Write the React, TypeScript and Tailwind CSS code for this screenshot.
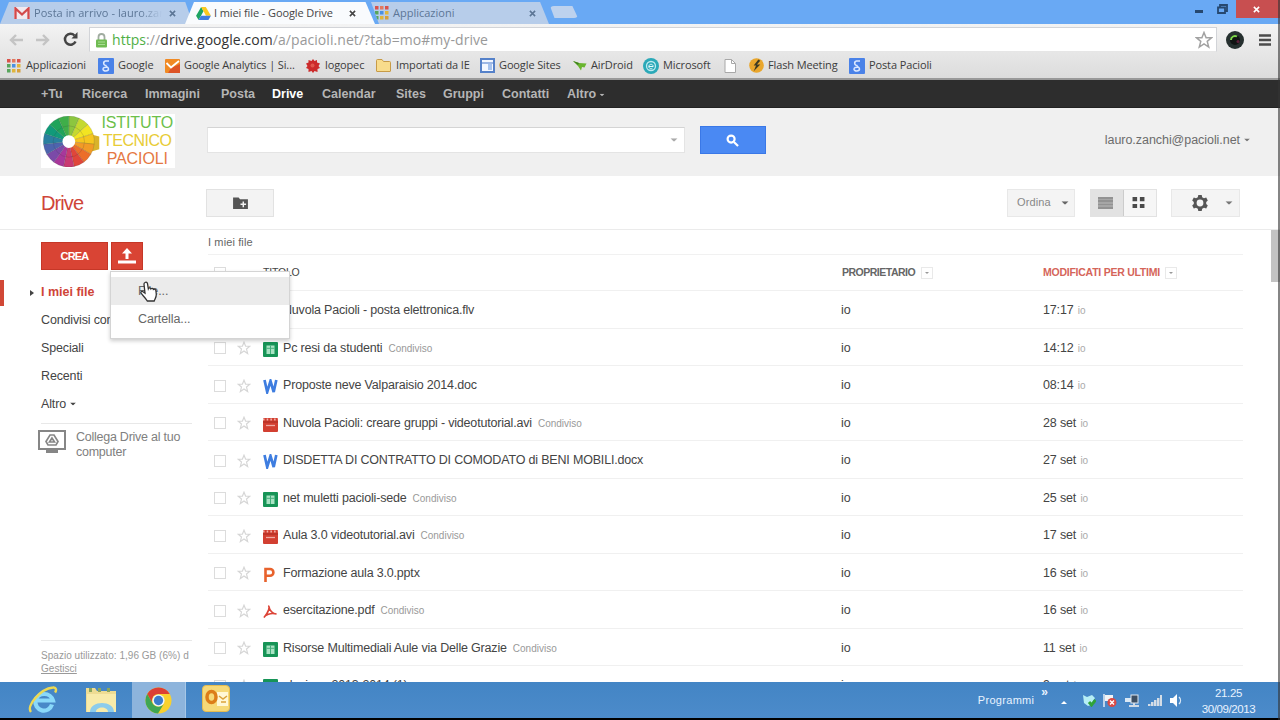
import React from "react";

type FileKind = "video" | "sheet" | "word" | "ppt" | "pdf";

const files: { kind: FileKind; name: string; shared?: boolean; date: string }[] = [
  { kind: "video", name: "Nuvola Pacioli - posta elettronica.flv", date: "17:17" },
  { kind: "sheet", name: "Pc resi da studenti", shared: true, date: "14:12" },
  { kind: "word", name: "Proposte neve Valparaisio 2014.doc", date: "08:14" },
  { kind: "video", name: "Nuvola Pacioli: creare gruppi - videotutorial.avi", shared: true, date: "28 set" },
  { kind: "word", name: "DISDETTA DI CONTRATTO DI COMODATO di BENI MOBILI.docx", date: "27 set" },
  { kind: "sheet", name: "net muletti pacioli-sede", shared: true, date: "25 set" },
  { kind: "video", name: "Aula 3.0 videotutorial.avi", shared: true, date: "17 set" },
  { kind: "ppt", name: "Formazione aula 3.0.pptx", date: "16 set" },
  { kind: "pdf", name: "esercitazione.pdf", shared: true, date: "16 set" },
  { kind: "sheet", name: "Risorse Multimediali Aule via Delle Grazie", shared: true, date: "11 set" },
  { kind: "sheet", name: "elezione 2013-2014 (1)", date: "9 set" },
];

function Caret({ className = "" }: { className?: string }) {
  return (
    <svg viewBox="0 0 8 4" className={`h-1 w-2 shrink-0 ${className}`} fill="currentColor">
      <path d="M0 0h8L4 4z" />
    </svg>
  );
}

function Star({ className = "" }: { className?: string }) {
  return (
    <svg viewBox="0 0 24 24" className={className} fill="none" stroke="currentColor" strokeWidth="2">
      <path d="M12 2l2.800 7h7.200l-5.700 4.800 2 7.700L12 17.200l-6.300 4.300 2-7.700L2 9h7.200z" />
    </svg>
  );
}

function FileIcon({ kind }: { kind: FileKind }) {
  if (kind === "sheet") {
    return (
      <svg viewBox="0 0 15 15" className="h-[15px] w-[15px]">
        <rect width="15" height="15" rx="1" fill="#179457" />
        <rect x="3.500" y="3.500" width="8" height="8.500" fill="#a9e3c4" />
        <path d="M7.500 3.500v8.500M3.500 6.300h8" stroke="#45ae7c" strokeWidth="1" />
      </svg>
    );
  }
  if (kind === "video") {
    return (
      <svg viewBox="0 0 15 15" className="h-[15px] w-[15px]">
        <rect y="1" width="15" height="14" rx="1" fill="#d23f31" />
        <path d="M0 2.500h15" stroke="#f2b5ae" strokeWidth="2" strokeDasharray="1.500 2.200" />
        <path d="M0 5h15" stroke="#a92c22" />
        <path d="M3 8.500h9" stroke="#f0aaa3" strokeWidth="1.300" />
      </svg>
    );
  }
  if (kind === "pdf") {
    return (
      <svg viewBox="0 0 15 15" className="h-[15px] w-[15px]" fill="none" stroke="#dc4437" strokeWidth="1.600">
        <path d="M5.400 1.500C7 3 5.900 7.500 1 13.500c1-2.600 6.500-5 12.500-3.500-3.500 0-7-3-7.500-7.500" />
      </svg>
    );
  }
  if (kind === "ppt") {
    return (
      <svg viewBox="0 0 15 15" className="h-[15px] w-[15px]" fill="none" stroke="#e8622c" strokeWidth="2.600">
        <path d="M2.500 15V2h4.500a3.300 3.300 0 0 1 0 6.800H3" />
      </svg>
    );
  }
  return (
    <svg viewBox="0 0 15 15" className="h-[15px] w-[15px]" fill="none" stroke="#3e7de0" strokeWidth="2.700">
      <path d="M1.500 1l2.700 12L7.500 2l3.200 11L13.300 1" />
    </svg>
  );
}

function GoogleG() {
  return (
    <svg viewBox="0 0 16 16" className="h-4 w-4">
      <rect width="16" height="16" rx="1" fill="#4a82e8" />
      <path d="M11 3H7.500a2.300 2.300 0 1 0 1 4.500c-1.500 1.200 2 1.500 2 3.500 0 2.500-5.500 2.500-5.500.2C5 9.500 7 9.200 9 9.300" fill="none" stroke="#dbe8ff" strokeWidth="1.500" />
    </svg>
  );
}

function AppsIcon() {
  const colors = ["#d9534a", "#e2795f", "#d9534a", "#58a55c", "#4a90e2", "#e0b53c", "#58a55c", "#e0b53c", "#d8a03c"];
  return (
    <svg viewBox="0 0 14 14" className="h-3.5 w-3.5">
      {colors.map((c, i) => (
        <rect key={i} x={(i % 3) * 5} y={Math.floor(i / 3) * 5} width="3.500" height="3.500" fill={c} />
      ))}
    </svg>
  );
}

function DriveLogo() {
  return (
    <svg viewBox="0 0 16 14" className="h-[13px] w-[15px]">
      <path d="M5.500 0L0 9.500 2.700 14 8 4.500z" fill="#1da462" />
      <path d="M5.500 0h5L16 9.500h-5.300z" fill="#fbc91f" />
      <path d="M5.300 9.500H16L13.300 14H2.700z" fill="#3f7de0" />
    </svg>
  );
}

function TabClose({ className = "" }: { className?: string }) {
  return (
    <svg viewBox="0 0 8 8" className={`h-[7px] w-[7px] shrink-0 ${className}`} stroke="currentColor" strokeWidth="1.800">
      <path d="M1 1l6 6M7 1L1 7" />
    </svg>
  );
}

const bookmarks = [
  { w: "w-[91px]", icon: <AppsIcon />, text: "Applicazioni", gap: "gap-[5px]" },
  { w: "w-[67px]", icon: <GoogleG />, text: "Google", gap: "gap-1" },
  {
    w: "w-[141px]",
    icon: (
      <svg viewBox="0 0 15 14" className="h-3.5 w-[15px]">
        <rect width="15" height="14" rx="1" fill="#f08a24" />
        <path d="M15 5v9H3l3-5z" fill="#dd5426" />
        <path d="M1.500 4L6 8.500l3-2.500 5-4" fill="none" stroke="#fff" strokeWidth="1.800" />
      </svg>
    ),
    text: "Google Analytics | Si...",
    gap: "gap-1",
  },
  {
    w: "w-[70px]",
    icon: (
      <svg viewBox="0 0 14 14" className="h-3.5 w-3.5">
        <path d="M7 0l1.500 2L11 1v2.500l3 1-1.500 2.500L14 9l-2.500 1v3L8.500 12 7 14l-1.500-2-3 1V10L0 9l1.500-2L0 4.500l2.500-1V1l3 1z" fill="#cc2a2a" />
        <circle cx="6.500" cy="6.500" r="2" fill="#e2564c" />
      </svg>
    ),
    text: "logopec",
    gap: "gap-[5px]",
  },
  {
    w: "w-[104px]",
    icon: (
      <svg viewBox="0 0 15 13" className="h-[13px] w-[15px]">
        <path d="M.5 12V1.500A1 1 0 0 1 1.500.5H6l1.500 2h6a1 1 0 0 1 1 1V12a.5.5 0 0 1-.5.5H1a.5.5 0 0 1-.5-.5z" fill="#f8dc8c" stroke="#c79b47" />
      </svg>
    ),
    text: "Importati da IE",
    gap: "gap-[5px]",
  },
  {
    w: "w-[93px]",
    icon: (
      <svg viewBox="0 0 15 15" className="h-[15px] w-[15px]">
        <rect x="1" y="1" width="13" height="13" fill="#f3f7ff" stroke="#5581c9" strokeWidth="2" />
        <path d="M2 5h11" stroke="#7fa2dc" strokeWidth="1.500" />
        <rect x="8" y="6" width="4" height="6" fill="#a7c3ee" />
      </svg>
    ),
    text: "Google Sites",
    gap: "gap-1",
  },
  {
    w: "w-[70px]",
    icon: (
      <svg viewBox="0 0 14 12" className="h-3 w-3.5">
        <path d="M0 1l6 2 7.500.5-2 4-2.500-.5-1 3.500L5 6z" fill="#69b52e" />
        <path d="M0 1l6 2-1 2z" fill="#3e7f1c" />
      </svg>
    ),
    text: "AirDroid",
    gap: "gap-1",
  },
  {
    w: "w-[81px]",
    icon: (
      <svg viewBox="0 0 16 16" className="h-4 w-4">
        <circle cx="8" cy="8" r="8" fill="#2ba9b8" />
        <circle cx="8" cy="8" r="4.500" fill="none" stroke="#bfeaf0" strokeWidth="1.300" />
        <path d="M6 8.500h4.200a2.200 2.200 0 1 0-.8 1.700" fill="none" stroke="#e6fafc" />
      </svg>
    ),
    text: "Microsoft",
    gap: "gap-1",
  },
  {
    w: "w-[25px]",
    icon: (
      <svg viewBox="0 0 12 14" className="h-3.5 w-3">
        <path d="M1 .5h6.500l4 4v9H1z" fill="#fff" stroke="#a8a8a8" />
        <path d="M7.500.5v4h4" fill="none" stroke="#a8a8a8" />
      </svg>
    ),
    text: "",
    gap: "gap-0",
  },
  {
    w: "w-[100px]",
    icon: (
      <svg viewBox="0 0 16 16" className="h-[15px] w-[15px]">
        <circle cx="8" cy="8" r="7.800" fill="#e9a62c" />
        <path d="M10 1.500L5 8h2.500L5 14l7-7H8.500l3.500-4z" fill="#3c3a24" />
      </svg>
    ),
    text: "Flash Meeting",
    gap: "gap-1",
  },
  { w: "w-[90px]", icon: <GoogleG />, text: "Posta Pacioli", gap: "gap-1" },
];

function BrowserChrome() {
  return (
    <header className="shrink-0 font-['Open_Sans',sans-serif]">
      <div className="flex h-6 items-end bg-[#69a9f4] text-[11px] text-[#5c7696]">
        <div className="-mr-2 flex h-[22px] w-[193px] items-center bg-[#b7cdea] pl-3.5 [clip-path:polygon(0_100%,9px_0,96%_0,100%_100%)]">
          <svg viewBox="0 0 16 12" className="h-3 w-4 shrink-0">
            <rect width="16" height="12" rx="1" fill="#f1e9ef" />
            <path d="M1.500 12V1.500L8 7.500l6.500-6V12" fill="none" stroke="#d34a4c" strokeWidth="2.300" />
          </svg>
          <span className="ml-1 w-[128px] overflow-hidden whitespace-nowrap tracking-[0.05px] [mask-image:linear-gradient(90deg,#000_82%,transparent)]">
            Posta in arrivo - lauro.zan
          </span>
          <TabClose className="ml-[7px]" />
        </div>
        <div className="z-10 flex h-[22px] w-[190px] items-center bg-[#f9fbfd] pl-[11px] text-[#454545] [clip-path:polygon(0_100%,9px_0,95%_0,100%_100%)]">
          <DriveLogo />
          <span className="ml-[3px] w-[128px] whitespace-nowrap tracking-[-0.1px]">I miei file - Google Drive</span>
          <TabClose className="ml-[7px]" />
        </div>
        <div className="-ml-1 flex h-[22px] w-[178px] items-center bg-[#b7cdea] pl-1 [clip-path:polygon(0_0,95%_0,100%_100%,8px_100%)]">
          <AppsIcon />
          <span className="ml-1 w-[136px]">Applicazioni</span>
          <TabClose />
        </div>
        <div className="mb-[6px] ml-[1px] h-3 w-7 rounded-sm bg-[#bdd2ee] [clip-path:polygon(0_0,80%_0,100%_100%,16%_100%)]" />
        <div className="ml-auto flex h-6 items-start text-[#26486f]">
          <div className="mr-[14px] mt-[10px] h-[3px] w-2 bg-[#26486f]" />
          <svg viewBox="0 0 11 10" className="mr-2 mt-1 h-2.5 w-[11px]" fill="none" stroke="currentColor" strokeWidth="1.800">
            <path d="M3 3V1h7v6H8M1 3.500h7V9H1z" />
          </svg>
          <div className="flex h-[18px] w-[44px] items-center justify-center bg-[#c84f50] pr-1 text-white">
            <TabClose />
          </div>
        </div>
      </div>
      <div className="h-14 border-b-2 border-[#999] bg-linear-to-b from-[#f3f3f3] to-[#dcdcdc]">
        <div className="flex h-7 items-end">
          <div className="flex h-[25px] w-[89px] items-center">
            <svg viewBox="0 0 14 12" className="ml-[9px] h-3 w-3.5" fill="none" stroke="#c4c4c4" strokeWidth="2.400">
              <path d="M14 6H2M7 1L2 6l5 5" />
            </svg>
            <svg viewBox="0 0 14 12" className="ml-[13px] h-3 w-3.5" fill="none" stroke="#c4c4c4" strokeWidth="2.400">
              <path d="M0 6h12M7 1l5 5-5 5" />
            </svg>
            <svg viewBox="0 0 15 15" className="ml-[13px] h-[15px] w-[15px]" fill="none" stroke="#444" strokeWidth="2.500">
              <path d="M12.500 9.500a5.500 5.500 0 1 1-1-6" />
              <path d="M14.500 0v6.500H8.500z" fill="#444" stroke="none" />
            </svg>
          </div>
          <div className="flex h-[25px] w-[1128px] items-center border border-[#d2d4d8] border-b-[#e6e6e6] bg-white pl-[6px] pr-[3px] pt-px">
            <svg viewBox="0 0 11 15" className="h-[15px] w-[11px]">
              <path d="M2.500 7V4a3 3 0 0 1 6 0v3" fill="none" stroke="#a0aca0" strokeWidth="1.800" />
              <rect y="6.500" width="11" height="8" rx="1" fill="#6fbb52" />
              <path d="M2 9h7M2 11.500h7" stroke="#a8dc92" />
            </svg>
            <span className="ml-[5px] whitespace-nowrap text-[14px] leading-5 tracking-[0.06px] text-[#999]">
              <span className="text-[#4faf45]">https</span>://<span className="text-[#333]">drive.google.com</span>
              /a/pacioli.net/?tab=mo#my-drive
            </span>
            <Star className="ml-auto h-[18px] w-[18px] text-[#a2a2a2]" />
          </div>
          <svg viewBox="0 0 18 18" className="mb-[3px] ml-[9px] h-[18px] w-[18px]">
            <circle cx="9" cy="9" r="9" fill="#26302f" />
            <circle cx="9" cy="9" r="5" fill="#101413" />
            <path d="M5 9a4 4 0 0 1 6-3.500" fill="none" stroke="#7cd64a" strokeWidth="2" />
            <circle cx="12" cy="10.500" r="1.500" fill="#5b1f3a" />
          </svg>
          <svg viewBox="0 0 12 12" className="mb-[6px] ml-[15px] h-3 w-3" stroke="#4c4c4c" strokeWidth="2.400">
            <path d="M0 1.500h12M0 6h12M0 10.500h12" />
          </svg>
        </div>
        <nav className="flex h-[26px] items-center pl-[7px] pt-px text-[11px] text-[#3c3c3c]">
          {bookmarks.map((b, i) => (
            <a key={i} className={`flex shrink-0 items-center whitespace-nowrap tracking-[-0.12px] ${b.w} ${b.gap}`}>
              <span className="shrink-0">{b.icon}</span>
              {b.text}
            </a>
          ))}
        </nav>
      </div>
    </header>
  );
}

const googleLinks = [
  { text: "+Tu", w: "w-[41px]" },
  { text: "Ricerca", w: "w-[63px]" },
  { text: "Immagini", w: "w-[76px]" },
  { text: "Posta", w: "w-[51px]" },
  { text: "Drive", w: "w-[50px]" },
  { text: "Calendar", w: "w-[74px]" },
  { text: "Sites", w: "w-[47px]" },
  { text: "Gruppi", w: "w-[59px]" },
  { text: "Contatti", w: "w-[65px]" },
  { text: "Altro", w: "w-[31px]" },
];

function WheelLogo() {
  const colors = [
    "#8cc63f", "#c5d92f", "#f2e422", "#f6c61f", "#f29b26", "#ec6e2a", "#e0463a",
    "#c93a72", "#a8379b", "#7b4aa8", "#4d64ae", "#2a7f9f", "#119a7a", "#1fa35a", "#3fae49",
  ];
  const step = (Math.PI * 2) / colors.length;
  const point = (i: number) => {
    const a = i * step - Math.PI / 2;
    return `${26 + 26 * Math.cos(a)} ${26 + 26 * Math.sin(a)}`;
  };
  return (
    <svg viewBox="0 0 58 52" className="h-[51px] w-[58px]">
      <path d="M42 21l8-2 7 2v13l-7 2-8-4z" fill="#d9b32b" />
      {colors.map((c, i) => (
        <path key={c} d={`M26 26L${point(i)}A26 26 0 0 1 ${point(i + 1)}z`} fill={c} stroke="#3d4a3a" strokeOpacity=".25" strokeWidth=".7" />
      ))}
      <circle cx="26" cy="26" r="16" fill="none" stroke="#333" strokeOpacity=".18" />
      <circle cx="26" cy="26" r="6.500" fill="#fff" />
    </svg>
  );
}

function DriveHeader() {
  return (
    <>
      <nav className="flex h-7 shrink-0 items-center border-b border-[#222] bg-[#2d2d2d] pl-[41px] pt-[2px] text-[12.5px] font-bold text-[#b5b5b5]">
        {googleLinks.map((l) => (
          <a key={l.text} className={`${l.w} ${l.text === "Drive" ? "text-white" : ""}`}>
            {l.text}
          </a>
        ))}
        <Caret className="scale-[.65]" />
      </nav>
      <div className="flex h-[68px] shrink-0 items-center bg-[#f0f0f0]">
        <div className="ml-[41px] mt-[-2px] flex h-[54px] w-[134px] items-center bg-white pl-[2px]">
          <WheelLogo />
          <div className="-ml-px flex w-[76px] flex-col items-center text-[16px] leading-[18px]">
            <span className="tracking-[-0.1px] text-[#6cc04a]">ISTITUTO</span>
            <span className="tracking-[-0.5px] text-[#e8cc35]">TECNICO</span>
            <span className="tracking-[-0.1px] text-[#e57842]">PACIOLI</span>
          </div>
        </div>
        <div className="ml-8 mt-[-4px] flex h-[26px] w-[478px] items-center justify-end border border-t-[#d4d4d4] border-[#e4e4e4] bg-white pr-[6px]">
          <Caret className="scale-90 text-[#aaa]" />
        </div>
        <button className="ml-[15px] mt-[-4px] flex h-7 w-[66px] items-center justify-center border border-[#3a78e7] bg-[#4a89f3] pr-0.5">
          <svg viewBox="0 0 14 14" className="h-[13px] w-[13px]" fill="none" stroke="#fff" strokeWidth="2.300">
            <circle cx="5.500" cy="5.500" r="3.800" />
            <path d="M8.500 8.500l4.500 4.500" />
          </svg>
        </button>
        <div className="ml-auto mr-[29px] mt-[-4px] flex items-center gap-[3px] text-[12.5px] tracking-[-0.05px] text-[#6c6c6c]">
          lauro.zanchi@pacioli.net
          <Caret className="scale-75 text-[#777]" />
        </div>
      </div>
      <div className="flex h-[54px] shrink-0 items-center border-b border-[#ebebeb] bg-white">
        <h1 className="w-[165px] pl-[41px] text-[20px] tracking-[-0.9px] text-[#cf4538]">Drive</h1>
        <button className="ml-[41px] flex h-7 w-[68px] items-center justify-center border border-[#e2e2e2] bg-[#f3f3f3]">
          <svg viewBox="0 0 16 14" className="h-[13px] w-[15px]">
            <path d="M0 1.500h6l1.500 2H16V14H0z" fill="#555" />
            <path d="M11 6v6M8 9h6" stroke="#f3f3f3" strokeWidth="1.600" />
          </svg>
        </button>
        <button className="ml-auto flex h-7 w-[68px] items-center justify-between border border-[#e8e8e8] bg-[#f4f4f4] pl-[9px] pr-[5px] text-[11px] tracking-[0.1px] text-[#888]">
          Ordina
          <Caret className="scale-90 text-[#666]" />
        </button>
        <div className="ml-[15px] flex h-7 w-[67px] border border-[#e2e2e2]">
          <div className="flex w-[33px] items-center justify-center border-r border-[#ccc] bg-[#e2e2e2] pr-1">
            <svg viewBox="0 0 15 12" className="h-3 w-[15px]" stroke="#929292" strokeWidth="2.700">
              <path d="M0 1.300h15M0 4.400h15M0 7.500h15M0 10.600h15" />
            </svg>
          </div>
          <div className="flex flex-1 items-center justify-center bg-[#f6f6f6] pr-1">
            <svg viewBox="0 0 13 12" className="h-[11px] w-[13px]" fill="#4a4a4a">
              <path d="M0 0h5v4.500H0zM8 0h5v4.500H8zM0 7.500h5V12H0zM8 7.500h5V12H8z" />
            </svg>
          </div>
        </div>
        <button className="ml-[14px] mr-[40px] flex h-7 w-[69px] items-center border border-[#e8e8e8] bg-[#f4f4f4]">
          <svg viewBox="0 0 16 16" className="ml-5 h-4 w-4">
            <path d="M6.300 0h3.400l.5 2.200 1.800 1 2.200-.7 1.600 2.900L14.200 7v2l1.600 1.600-1.600 2.900-2.200-.7-1.800 1-.5 2.200H6.300l-.5-2.200-1.800-1-2.200.7-1.600-2.900L1.800 9V7L.2 5.400l1.600-2.900 2.200.7 1.800-1z" fill="#555" />
            <circle cx="8" cy="8" r="3.400" fill="#f4f4f4" />
          </svg>
          <Caret className="ml-[17px] scale-90 text-[#777]" />
        </button>
      </div>
    </>
  );
}

function UploadMenu() {
  return (
    <div className="absolute left-[110px] top-[41px] z-20 h-[68px] w-[180px] border border-[#d4d4d4] bg-white pt-[5px] text-[12.5px] text-[#666] shadow-[0_2px_4px_rgba(0,0,0,.2)]">
      <div className="flex h-7 items-center bg-[#ebebeb] pl-[27px]">File...</div>
      <div className="flex h-7 items-center pl-[27px] tracking-[-0.1px]">Cartella...</div>
      <svg viewBox="0 0 20 22" className="absolute left-[28px] top-[9px] h-[22px] w-5">
        <path
          d="M6 1.500c1.300-.7 2.300 0 2.500 1.200l.8 5c.5-1.200 2.300-1.100 2.600.2.800-.9 2.300-.6 2.500.6 1-.7 2.400 0 2.500 1.300l.4 3.500c.2 2.700-1.300 4.600-2.100 6.700H8.300c-1.700-3-4.300-5.300-6.300-7.800-.7-1.300.7-2.300 2-1.500l2 1.500-1-8.800c-.1-.9.300-1.600 1-1.900z"
          fill="#fff"
          stroke="#333"
          strokeWidth="1.300"
        />
      </svg>
    </div>
  );
}

function Sidebar() {
  return (
    <aside className="flex w-[192px] shrink-0 flex-col pl-[41px]">
      <div className="mt-3 flex h-7 gap-[3px]">
        <button className="flex w-[67px] items-center justify-center border border-[#c53727] bg-[#d94434] text-[11px] font-bold tracking-[-0.8px] text-white">
          CREA
        </button>
        <button className="flex w-8 items-center justify-center border border-[#c53727] bg-[#d94434]">
          <svg viewBox="0 0 18 16" className="h-4 w-[18px]" fill="#fff">
            <path d="M9 0l5 5.500h-3.500V11h-3V5.500H4zM0 12.500h18v3H0z" />
          </svg>
        </button>
      </div>
      <div className="mt-2 text-[12.5px] tracking-[-0.15px] text-[#444]">
        <div className="relative flex h-7 items-center pt-px font-bold tracking-normal text-[#cf4538]">
          <span className="absolute -left-[41px] h-[26px] w-1 bg-[#d14836]" />
          <svg viewBox="0 0 4 6" className="absolute -left-[11px] h-[6px] w-1">
            <path d="M0 0l4 3-4 3z" fill="#444" />
          </svg>
          I miei file
        </div>
        <div className="flex h-7 items-center whitespace-nowrap">Condivisi con me</div>
        <div className="flex h-7 items-center">Speciali</div>
        <div className="flex h-7 items-center">Recenti</div>
        <div className="flex h-7 items-center gap-[3px]">
          Altro <Caret className="scale-75" />
        </div>
      </div>
      <div className="mt-[5px] flex border-t border-[#e8e8e8] pt-1.5">
        <svg viewBox="0 0 28 23" className="-ml-[3px] h-[23px] w-7 shrink-0" fill="none" stroke="#868686" strokeWidth="2">
          <rect x="1" y="1" width="26" height="18" />
          <path d="M8 21.500h12" strokeWidth="3" />
          <path d="M12 5h4l4 6.500-2 3.500h-8l-2-3.500zM14 8l-2.500 4h5z" strokeWidth="1.700" />
        </svg>
        <p className="ml-[10px] whitespace-nowrap text-[12.5px] leading-[15px] tracking-[-0.25px] text-[#808080]">
          Collega Drive al tuo
          <br />
          computer
        </p>
      </div>
      <div className="mb-[7px] mt-auto overflow-hidden whitespace-nowrap border-t border-[#e8e8e8] pt-2 text-[10px] leading-[13px] tracking-[0.03px] text-[#999]">
        Spazio utilizzato: 1,96 GB (6%) d
        <br />
        <a className="underline">Gestisci</a>
      </div>
    </aside>
  );
}

function SortBox() {
  return (
    <span className="flex h-3 w-3 items-center justify-center border border-[#e9e9e9] text-[#999]">
      <Caret className="scale-50" />
    </span>
  );
}

function FileList() {
  return (
    <main className="ml-4 w-[1035px] shrink-0 text-[12.5px] text-[#444]">
      <div className="flex h-[25px] items-center border-b border-[#f1f1f1] text-[11px] tracking-[0.12px] text-[#666]">I miei file</div>
      <div className="flex h-9 items-center border-b border-[#f0f0f0] pt-px text-[10.5px] tracking-[-0.2px]">
        <span className="ml-[6px] h-3 w-3 border border-[#dcdcdc]" />
        <span className="ml-[37px] w-[579px]">TITOLO</span>
        <span className="flex w-[201px] items-center gap-[6px] font-semibold tracking-[-0.5px] text-[#666]">
          PROPRIETARIO <SortBox />
        </span>
        <span className="flex items-center gap-[5px] whitespace-nowrap font-bold tracking-[-0.25px] text-[#d5655a]">
          MODIFICATI PER ULTIMI <SortBox />
        </span>
      </div>
      {files.map((f) => (
        <div key={f.name} className="flex h-[37.5px] items-center border-b border-[#f0f0f0] pt-[3px]">
          <span className="ml-[6px] h-3 w-3 border border-[#dcdcdc]" />
          <Star className="ml-[11px] h-3.5 w-3.5 text-[#d6d6d6]" />
          <span className="ml-3 mt-0.5">
            <FileIcon kind={f.kind} />
          </span>
          <span className="ml-[5px] w-[558px] whitespace-nowrap tracking-[-0.18px]">
            {f.name}
            {f.shared && <span className="ml-[6px] text-[10px] tracking-normal text-[#999]">Condiviso</span>}
          </span>
          <span className="w-[202px]">io</span>
          <span className="tracking-[-0.15px]">
            {f.date} <span className="ml-px text-[10px] text-[#aaa]">io</span>
          </span>
        </div>
      ))}
    </main>
  );
}

function Taskbar() {
  return (
    <footer className="flex h-[38px] shrink-0 items-center border-b-2 border-black bg-linear-to-b from-[#4385c5] to-[#4c8bca] text-[11px] text-[#e8f3ff]">
      <svg viewBox="0 0 30 30" className="ml-7 h-[30px] w-[30px]">
        <path d="M7.500 15.500H25a9 8.500 0 0 0-17.500 0 8.500 8.500 0 0 0 16.500 4" fill="none" stroke="#8ad9f9" strokeWidth="4.200" />
        <path d="M3 27C-2 21 12 4 25 2.500c3.500-.5 3.500 3 2 5" fill="none" stroke="#ecd954" strokeWidth="2.500" />
      </svg>
      <svg viewBox="0 0 32 28" className="ml-[27px] h-7 w-8">
        <path d="M1 2h9l2 3h19v21H1z" fill="#eedc93" />
        <path d="M4 2h3v4H4zM13 2h3v4h-3zM22 2h3v4h-3z" fill="#8aa65c" />
        <path d="M2 8h29v18H2z" fill="#f8ebaa" />
        <path d="M5 26c0-12 24-12 24 0h-6c0-6-12-6-12 0z" fill="#8cccec" />
      </svg>
      <div className="ml-[15px] flex h-full w-[54px] items-center justify-center border-r border-[#a6c7e7] bg-[#8db4dc]">
        <svg viewBox="0 0 28 28" className="h-[27px] w-[27px]">
          <circle cx="14" cy="14" r="13.500" fill="#f9d12e" />
          <path d="M2.300 7.200a13.500 13.500 0 0 1 23.400 0H14a7 7 0 0 0-6.200 10z" fill="#dc3f35" />
          <path d="M2.300 7.200A13.500 13.500 0 0 0 13.500 27.500l6-10A7 7 0 0 1 7.900 17z" fill="#3fa652" />
          <circle cx="14" cy="14" r="6.300" fill="#eef4fa" />
          <circle cx="14" cy="14" r="4.800" fill="#3a7ccb" />
        </svg>
      </div>
      <div className="mb-1 ml-4 flex h-[27px] w-7 items-center justify-center rounded-sm border border-[#e5bc50] bg-[#f6d978]">
        <svg viewBox="0 0 26 22" className="h-[22px] w-[26px]">
          <path d="M14 5h11v14H14z" fill="#fff7d6" />
          <ellipse cx="8.500" cy="10" rx="4.500" ry="5.500" fill="none" stroke="#dc7d19" strokeWidth="3.500" />
          <path d="M16 9l4 3 4-3M18 15h5" fill="none" stroke="#dba23b" strokeWidth="1.500" />
        </svg>
      </div>
      <span className="ml-auto tracking-[0.3px]">Programmi</span>
      <span className="-mt-4 ml-[7px] text-[12px] font-bold leading-3">»</span>
      <svg viewBox="0 0 6 3" className="ml-[13px] mr-[15px] mt-1 h-[3px] w-[6px]" fill="#fff">
        <path d="M0 3l3-3 3 3z" />
      </svg>
      <div className="mt-px flex items-center">
        <svg viewBox="0 0 14 13" className="h-[13px] w-3.5">
          <path d="M1 1l4 2 5-2 3 3-2 3 1 3-6 2-4-3z" fill="#b6eef5" />
          <path d="M7 8l2.500 3L13.500 6" fill="none" stroke="#2fa339" strokeWidth="3" />
        </svg>
        <svg viewBox="0 0 14 13" className="ml-[7px] h-[13px] w-3.5">
          <path d="M1 0v13" stroke="#e5edf6" strokeWidth="1.500" />
          <path d="M2 1h8v6H2z" fill="#f2f4f6" />
          <circle cx="9" cy="8.500" r="4.500" fill="#d94a45" />
          <path d="M7 6.500l4 4M11 6.500l-4 4" stroke="#fff" strokeWidth="1.400" />
        </svg>
        <svg viewBox="0 0 15 14" className="ml-2 h-3.5 w-[15px]">
          <path d="M0 4h6v4H0z" fill="#dbe9f5" />
          <rect x="6" y="1" width="7" height="8" fill="#3d4f63" stroke="#dfe8f0" />
          <path d="M4 12h10M9 9v3" stroke="#d0dbe6" strokeWidth="2" />
        </svg>
        <svg viewBox="0 0 14 11" className="ml-2 h-[11px] w-3.5" fill="#d4dde6">
          <path d="M0 9h2.500v2H0zM3 7h2.500v4H3zM6 5h2.500v6H6zM9 3h2.500v8H9zM12 0h2v11h-2z" />
        </svg>
        <svg viewBox="0 0 13 13" className="ml-2 h-[13px] w-[13px]">
          <path d="M0 4h3l4-4v13L3 9H0z" fill="#fff" />
          <path d="M9 3c2 2 2 5 0 7" fill="none" stroke="#d8e7f5" strokeWidth="1.300" />
        </svg>
      </div>
      <div className="ml-[18px] mr-[24px] w-[55px] whitespace-nowrap pt-0.5 text-center text-[11.5px] leading-4 tracking-[-0.4px]">
        <div>21.25</div>
        <div>30/09/2013</div>
      </div>
    </footer>
  );
}

export default function App() {
  return (
    <div className="relative flex h-[720px] w-[1280px] flex-col overflow-hidden bg-white font-['Liberation_Sans',Arial,sans-serif]">
      <BrowserChrome />
      <DriveHeader />
      <div className="relative flex h-[452px] shrink-0 overflow-hidden">
        <Sidebar />
        <FileList />
        <div className="ml-auto h-[52px] w-[9px] shrink-0 bg-[#c3c3c3]" />
        <UploadMenu />
      </div>
      <Taskbar />
      <div className="absolute right-0 top-0 z-30 h-full w-0.5 bg-[#333]/60" />
    </div>
  );
}
